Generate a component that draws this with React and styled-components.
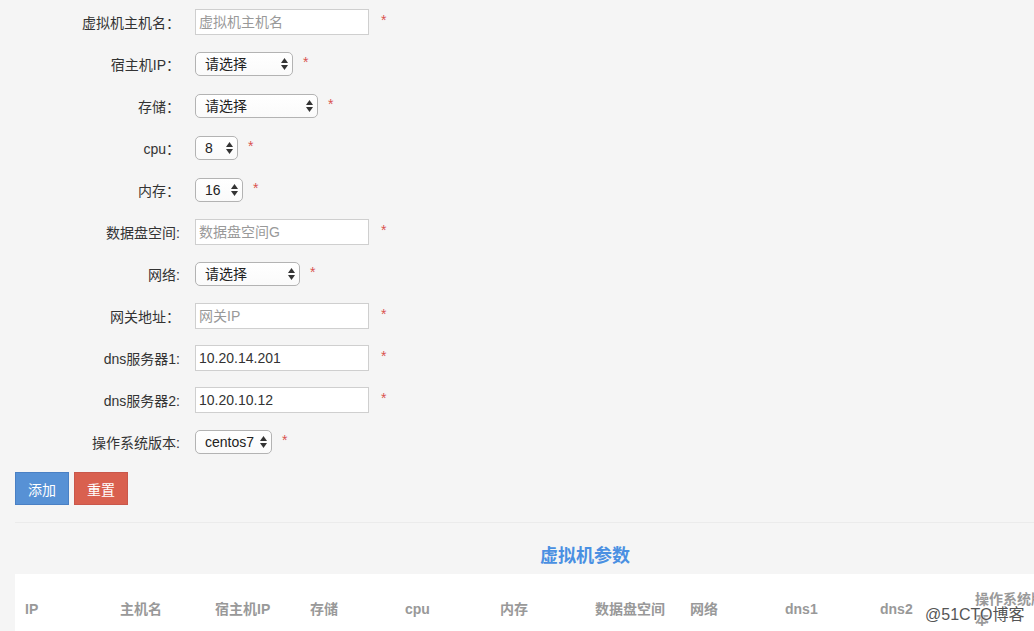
import React from "react";
import styled, { createGlobalStyle } from "styled-components";

const GlobalStyle = createGlobalStyle`
  html, body {
    margin: 0;
    padding: 0;
    background: #f5f5f5;
    overflow: hidden;
  }
  body {
    font-family: "Liberation Sans", "Noto Sans CJK SC", sans-serif;
    font-size: 14px;
    color: #333;
  }
`;

const Viewport = styled.div`
  width: 100%;
  overflow: hidden;
`;

const Page = styled.div`
  position: relative;
  width: 1140px;
  padding: 0 15px;
`;

const Form = styled.form`
  padding-top: 1px;
`;

const Row = styled.div`
  display: flex;
  align-items: center;
  height: 42px;
`;

const Label = styled.label`
  width: 165px;
  margin-right: 15px;
  text-align: right;
  color: #333;
  white-space: nowrap;
`;

const TextInput = styled.input`
  box-sizing: border-box;
  width: 174px;
  height: 26px;
  padding: 0 3px;
  border: 1px solid #cfcfcf;
  border-radius: 0;
  background: #fff;
  font-family: inherit;
  font-size: 14px;
  color: #333;
  outline: none;
  &::placeholder {
    color: #999;
  }
`;

const SelectWrap = styled.div`
  position: relative;
  width: ${(p) => p.$w}px;
  height: 24px;
`;

const Select = styled.select`
  box-sizing: border-box;
  appearance: none;
  -webkit-appearance: none;
  width: 100%;
  height: 100%;
  padding: 0 0 0 9px;
  border: 1px solid #b3b3b3;
  border-radius: 5px;
  background: linear-gradient(#ffffff, #fafafa);
  font-family: inherit;
  font-size: 14px;
  color: #222;
  outline: none;
`;

const Arrows = styled.svg`
  position: absolute;
  right: 5px;
  top: 6px;
  pointer-events: none;
`;

const Star = styled.span`
  margin-left: ${(p) => (p.$select ? 10 : 12)}px;
  margin-top: -4px;
  color: #d9534f;
  font-size: 14px;
`;

const Buttons = styled.div`
  display: flex;
  gap: 5px;
  margin-top: 9px;
`;

const Button = styled.button`
  box-sizing: border-box;
  width: 54px;
  height: 33px;
  border: 1px solid ${(p) => (p.$danger ? "#c9574b" : "#4a80c4")};
  border-radius: 0;
  background: ${(p) => (p.$danger ? "#d9604f" : "#5791d5")};
  color: #fff;
  font-family: inherit;
  font-size: 14px;
  padding: 0;
`;

const Divider = styled.hr`
  margin: 17px 0 0;
  border: 0;
  border-top: 1px solid #ebebeb;
`;

const Title = styled.h3`
  margin: 20px 0 5px;
  text-align: center;
  font-size: 18px;
  line-height: 26px;
  font-weight: bold;
  color: #4a90e2;
`;

const Table = styled.table`
  border-collapse: collapse;
  background: #fff;
  table-layout: fixed;
  width: 1140px;
`;

const Th = styled.th`
  box-sizing: border-box;
  width: 95px;
  padding: 15px 10px;
  text-align: left;
  vertical-align: middle;
  font-size: 14px;
  line-height: 20px;
  font-weight: bold;
  color: #999;
`;

const Watermark = styled.div`
  position: absolute;
  left: 925px;
  top: 601px;
  font-size: 16px;
  color: #555;
  text-shadow: 0 0 2px #fff, 0 0 2px #fff;
  white-space: nowrap;
`;

function UpDown() {
  return (
    <Arrows width="7" height="12" viewBox="0 0 7 12">
      <path d="M0 5 L3.5 0 L7 5 Z" fill="#333" />
      <path d="M0 7 L3.5 12 L7 7 Z" fill="#333" />
    </Arrows>
  );
}

const fields = [
  { label: "虚拟机主机名：", type: "input", placeholder: "虚拟机主机名" },
  { label: "宿主机IP：", type: "select", width: 98, value: "请选择" },
  { label: "存储：", type: "select", width: 123, value: "请选择" },
  { label: "cpu：", type: "select", width: 43, value: "8" },
  { label: "内存：", type: "select", width: 48, value: "16" },
  { label: "数据盘空间:", type: "input", placeholder: "数据盘空间G" },
  { label: "网络:", type: "select", width: 105, value: "请选择" },
  { label: "网关地址：", type: "input", placeholder: "网关IP" },
  { label: "dns服务器1:", type: "input", value: "10.20.14.201" },
  { label: "dns服务器2:", type: "input", value: "10.20.10.12" },
  { label: "操作系统版本:", type: "select", width: 77, value: "centos7" },
];

const columns = [
  "IP",
  "主机名",
  "宿主机IP",
  "存储",
  "cpu",
  "内存",
  "数据盘空间",
  "网络",
  "dns1",
  "dns2",
  "操作系统版本",
  "操作",
];

export default function App() {
  return (
    <Viewport>
      <GlobalStyle />
      <Page>
        <Form onSubmit={(e) => e.preventDefault()}>
          {fields.map((f) => (
            <Row key={f.label}>
              <Label>{f.label}</Label>
              {f.type === "input" ? (
                <TextInput
                  placeholder={f.placeholder}
                  defaultValue={f.value}
                />
              ) : (
                <SelectWrap $w={f.width}>
                  <Select defaultValue={f.value}>
                    <option>{f.value}</option>
                  </Select>
                  <UpDown />
                </SelectWrap>
              )}
              <Star $select={f.type === "select"}>*</Star>
            </Row>
          ))}
          <Buttons>
            <Button type="button">添加</Button>
            <Button type="button" $danger>
              重置
            </Button>
          </Buttons>
        </Form>
        <Divider />
        <Title>虚拟机参数</Title>
        <Table>
          <thead>
            <tr>
              {columns.map((c) => (
                <Th key={c}>{c}</Th>
              ))}
            </tr>
          </thead>
        </Table>
        <Watermark>@51CTO博客</Watermark>
      </Page>
    </Viewport>
  );
}
